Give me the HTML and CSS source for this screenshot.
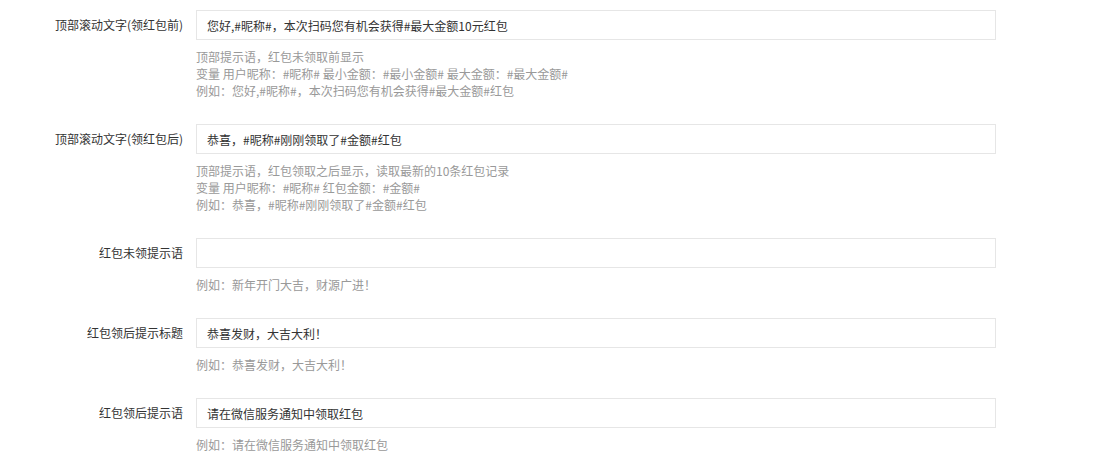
FILE: index.html
```html
<!DOCTYPE html>
<html lang="zh-CN">
<head>
    <meta charset="UTF-8">
    <title>红包提示语设置</title>
    <link rel="stylesheet" href="styles.css">
</head>
<body>
<div class="form-wrap">
    <div class="form-item">
        <label class="form-label">顶部滚动文字(领红包前)</label>
        <div class="form-block">
            <input class="form-input" type="text" value="您好,#昵称#，本次扫码您有机会获得#最大金额10元红包">
            <div class="form-tip">
                <p>顶部提示语，红包未领取前显示</p>
                <p>变量 用户昵称：#昵称# 最小金额：#最小金额# 最大金额：#最大金额#</p>
                <p>例如：您好,#昵称#，本次扫码您有机会获得#最大金额#红包</p>
            </div>
        </div>
    </div>
    <div class="form-item">
        <label class="form-label">顶部滚动文字(领红包后)</label>
        <div class="form-block">
            <input class="form-input" type="text" value="恭喜，#昵称#刚刚领取了#金额#红包">
            <div class="form-tip">
                <p>顶部提示语，红包领取之后显示，读取最新的10条红包记录</p>
                <p>变量 用户昵称：#昵称# 红包金额：#金额#</p>
                <p>例如：恭喜，#昵称#刚刚领取了#金额#红包</p>
            </div>
        </div>
    </div>
    <div class="form-item">
        <label class="form-label">红包未领提示语</label>
        <div class="form-block">
            <input class="form-input" type="text" value="">
            <div class="form-tip">
                <p>例如：新年开门大吉，财源广进！</p>
            </div>
        </div>
    </div>
    <div class="form-item">
        <label class="form-label">红包领后提示标题</label>
        <div class="form-block">
            <input class="form-input" type="text" value="恭喜发财，大吉大利！">
            <div class="form-tip">
                <p>例如：恭喜发财，大吉大利！</p>
            </div>
        </div>
    </div>
    <div class="form-item">
        <label class="form-label">红包领后提示语</label>
        <div class="form-block">
            <input class="form-input" type="text" value="请在微信服务通知中领取红包">
            <div class="form-tip">
                <p>例如：请在微信服务通知中领取红包</p>
            </div>
        </div>
    </div>
</div>
</body>
</html>
```

FILE: styles.css
```css
body {
    margin: 0;
    background: #fff;
    font: 12px/17px "Noto Sans CJK SC", "Microsoft YaHei", sans-serif;
    color: #333;
}
.form-wrap {
    padding-top: 10px;
}
.form-item {
    display: flex;
    align-items: flex-start;
    margin-bottom: 25px;
}
.form-label {
    width: 183px;
    margin-right: 13px;
    text-align: right;
    line-height: 30px;
    color: #333;
}
.form-block {
    width: 800px;
}
.form-input {
    display: block;
    box-sizing: border-box;
    width: 100%;
    height: 30px;
    padding: 0 10px;
    border: 1px solid #e6e6e6;
    outline: none;
    font: 12px "Noto Sans CJK SC", "Microsoft YaHei", sans-serif;
    color: #333;
    background: #fff;
}
.form-tip {
    margin-top: 8px;
    color: #999;
}
.form-tip p {
    margin: 0;
}
```
